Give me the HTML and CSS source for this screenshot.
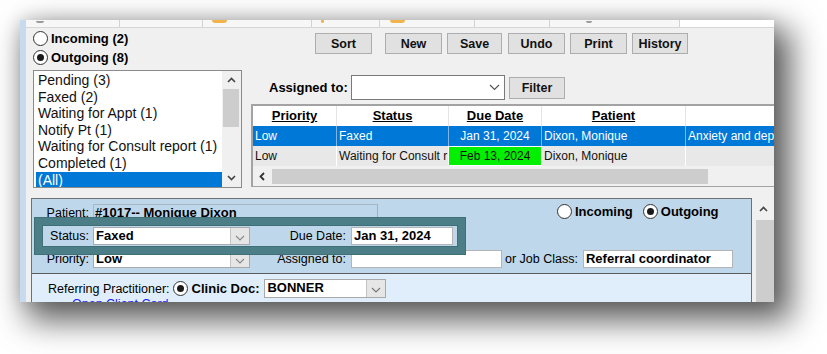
FILE: index.html
```html
<!DOCTYPE html>
<html>
<head>
<meta charset="utf-8">
<title>Referrals</title>
<link rel="stylesheet" href="styles.css">
</head>
<body>
<div class="shot">
  <div class="edge"></div>
  <div class="app">
    <div class="tabs">
      <div class="tab w1"><span class="mark gray m1"></span></div>
      <div class="tab w2"></div>
      <div class="tab w3"><span class="mark orange m3"></span></div>
      <div class="tab w4"><span class="mark orange m4"></span></div>
      <div class="tab w5"><span class="mark orange m5"></span></div>
      <div class="tab w6"></div>
      <div class="tab w7"><span class="mark gray m7"></span></div>
      <div class="tab blank"></div>
    </div>

    <div class="top">
      <div class="leftcol">
        <div class="radio"><span class="rb"></span><span class="rtext">Incoming (2)</span></div>
        <div class="radio"><span class="rb on"></span><span class="rtext">Outgoing (8)</span></div>
        <div class="listbox">
          <ul class="items">
            <li>Pending (3)</li>
            <li>Faxed (2)</li>
            <li>Waiting for Appt (1)</li>
            <li>Notify Pt (1)</li>
            <li>Waiting for Consult report (1)</li>
            <li>Completed (1)</li>
            <li class="selected">(All)</li>
          </ul>
          <div class="vscroll">
            <div class="arrow"><svg width="9" height="6" viewBox="0 0 9 6"><path d="M1 5 L4.5 1.5 L8 5" fill="none" stroke="#444" stroke-width="1.6"/></svg></div>
            <div class="thumb"></div>
            <div class="spacer"></div>
            <div class="arrow"><svg width="9" height="6" viewBox="0 0 9 6"><path d="M1 1 L4.5 4.5 L8 1" fill="none" stroke="#444" stroke-width="1.6"/></svg></div>
          </div>
        </div>
      </div>

      <div class="rightcol">
        <div class="buttons">
          <button class="btn b-sort">Sort</button>
          <button class="btn b-new">New</button>
          <button class="btn b-save">Save</button>
          <button class="btn b-undo">Undo</button>
          <button class="btn b-print">Print</button>
          <button class="btn b-hist">History</button>
        </div>
        <div class="assign">
          <span class="alabel">Assigned to:</span>
          <div class="combo"><span class="cv"><svg width="11" height="7" viewBox="0 0 11 7"><path d="M1 1 L5.5 5.5 L10 1" fill="none" stroke="#555" stroke-width="1.2"/></svg></span></div>
          <button class="btn b-filter">Filter</button>
        </div>
        <div class="grid">
          <div class="grow head">
            <div class="c">Priority</div>
            <div class="c">Status</div>
            <div class="c">Due Date</div>
            <div class="c">Patient</div>
            <div class="c"></div>
          </div>
          <div class="grow row-sel">
            <div class="c">Low</div>
            <div class="c">Faxed</div>
            <div class="c center">Jan 31, 2024</div>
            <div class="c">Dixon, Monique</div>
            <div class="c">Anxiety and dep</div>
          </div>
          <div class="grow row-alt">
            <div class="c">Low</div>
            <div class="c">Waiting for Consult r</div>
            <div class="c center due">Feb 13, 2024</div>
            <div class="c">Dixon, Monique</div>
            <div class="c"></div>
          </div>
          <div class="hscroll">
            <div class="harrow"><svg width="6" height="9" viewBox="0 0 6 9"><path d="M5 1 L1.5 4.5 L5 8" fill="none" stroke="#333" stroke-width="1.8"/></svg></div>
            <div class="hthumb"></div>
          </div>
        </div>
      </div>
    </div>

    <div class="panel">
      <div class="pmain">
        <div class="upper">
          <div class="frow">
            <span class="lab1">Patient:</span>
            <div class="pbox">#1017-- Monique Dixon</div>
            <div class="pradios">
              <span class="rb"></span><span class="rtext">Incoming</span>
              <span class="rb on gapl"></span><span class="rtext">Outgoing</span>
            </div>
          </div>
          <div class="frow">
            <span class="lab1">Status:</span>
            <div class="sel w157"><span class="val">Faxed</span><span class="arr"><svg width="10" height="6" viewBox="0 0 10 6"><path d="M1 1 L5 5 L9 1" fill="none" stroke="#888" stroke-width="1.1"/></svg></span></div>
            <span class="lab2">Due Date:</span>
            <div class="inp w102">Jan 31, 2024</div>
          </div>
          <div class="frow">
            <span class="lab1">Priority:</span>
            <div class="sel w157"><span class="val">Low</span><span class="arr"><svg width="10" height="6" viewBox="0 0 10 6"><path d="M1 1 L5 5 L9 1" fill="none" stroke="#888" stroke-width="1.1"/></svg></span></div>
            <span class="lab2">Assigned to:</span>
            <div class="inp w151"></div>
            <span class="lab3">or Job Class:</span>
            <div class="inp w150">Referral coordinator</div>
          </div>
          <div class="highlight"></div>
        </div>
        <div class="lower">
          <div class="lrow">
            <span class="rlabel">Referring Practitioner:</span>
            <span class="rb on"></span>
            <span class="rtext">Clinic Doc:</span>
            <div class="sel w122"><span class="val">BONNER</span><span class="arr"><svg width="10" height="6" viewBox="0 0 10 6"><path d="M1 1 L5 5 L9 1" fill="none" stroke="#777" stroke-width="1.1"/></svg></span></div>
          </div>
          <div class="link">Open Client Card</div>
        </div>
      </div>
      <div class="pscroll">
        <div class="arrow"><svg width="9" height="6" viewBox="0 0 9 6"><path d="M1 5 L4.5 1.5 L8 5" fill="none" stroke="#444" stroke-width="1.6"/></svg></div>
        <div class="pthumb"></div>
      </div>
    </div>
  </div>
</div>
</body>
</html>
```

FILE: styles.css
```css
* { box-sizing: border-box; }
html, body { margin: 0; padding: 0; background: #ffffff; }
body {
  font-family: "Liberation Sans", Arial, sans-serif;
  font-size: 13px;
  color: #000;
  width: 827px;
  height: 354px;
  overflow: hidden;
}

.shot {
  margin: 20px 0 0 20px;
  width: 754px;
  height: 282px;
  display: flex;
  overflow: hidden;
  box-shadow: 12px 14px 30px 5px rgba(0,0,0,0.62), 0 0 16px rgba(0,0,0,0.14);
}
.edge { width: 6px; flex: none; background: #c6dbf0; }
.app { flex: 1; min-width: 0; background: #f0f0f0; display: flex; flex-direction: column; }

/* cropped tab strip */
.tabs { height: 8px; flex: none; display: flex; background: #f7f7f7; border-bottom: 1px solid #d6d6d6; }
.tab { height: 100%; border-right: 1px solid #d2d2d2; display: flex; align-items: flex-start; }
.w1 { width: 94px; } .w2 { width: 83px; } .w3 { width: 109px; } .w4 { width: 68px; }
.w5 { width: 95px; } .w6 { width: 75px; } .w7 { width: 130px; }
.tab.blank { flex: 1; background: #fff; border-right: none; }
.mark { display: block; border-radius: 0 0 3px 3px; }
.mark.orange { background: #f0b44a; height: 3px; }
.mark.gray { background: #9a9a9a; height: 2px; }
.m1 { width: 8px; margin: 1px 0 0 10px; }
.m3 { width: 15px; margin-left: 9px; }
.m4 { width: 3px; margin-left: 9px; }
.m5 { width: 15px; margin-left: 10px; }
.m7 { width: 6px; margin: 1px 0 0 36px; }

/* top area */
.top { height: 170px; flex: none; display: flex; }
.leftcol { width: 225px; flex: none; padding: 1px 0 0 7px; }
.radio { height: 19px; display: flex; align-items: center; }
.rb {
  width: 15px; height: 15px; border-radius: 50%;
  border: 1px solid #333; background: #fff; flex: none;
  display: inline-flex; align-items: center; justify-content: center;
}
.rb.on::after { content: ""; width: 7px; height: 7px; border-radius: 50%; background: #1a1a1a; }
.rtext { font-weight: bold; font-size: 13px; margin-left: 3px; white-space: nowrap; }

.listbox {
  margin-top: 3px; width: 209px; height: 118px;
  border: 1px solid #8b8b8b; background: #fff; display: flex;
}
.items {
  list-style: none; margin: 0; padding: 1px 0 0 2px; flex: 1; overflow: hidden;
  font-size: 14px; line-height: 16.6px; color: #111;
}
.items li { padding-left: 2px; white-space: nowrap; }
.items li.selected { background: #0078d7; color: #fff; }
.vscroll { width: 19px; flex: none; background: #f0f0f0; display: flex; flex-direction: column; align-items: center; }
.vscroll .arrow { height: 18px; width: 100%; display: flex; align-items: center; justify-content: center; }
.vscroll .thumb { width: 16px; height: 38px; background: #cdcdcd; margin-right: 2px; }
.vscroll .spacer { flex: 1; }

.rightcol { flex: 1; min-width: 0; }
.buttons { margin-top: 5px; padding-left: 64px; display: flex; height: 21px; }
.btn {
  font-family: "Liberation Sans", Arial, sans-serif;
  font-weight: bold; font-size: 12.5px; color: #111;
  background: #e1e1e1; border: 1px solid #adadad;
  height: 21px; padding: 0; margin: 0;
}
.b-sort { width: 57px; }
.b-new { width: 57px; margin-left: 13px; }
.b-save { width: 55px; margin-left: 5px; }
.b-undo { width: 57px; margin-left: 6px; }
.b-print { width: 57px; margin-left: 5px; }
.b-hist { width: 56px; margin-left: 5px; }

.assign { margin-top: 21px; padding-left: 18px; display: flex; align-items: center; height: 25px; }
.alabel { font-weight: bold; font-size: 13px; width: 82px; }
.combo {
  width: 154px; height: 25px; background: #fff; border: 1px solid #7a7a7a;
  display: flex; align-items: center; justify-content: flex-end;
}
.combo .cv { width: 20px; display: flex; justify-content: center; }
.b-filter { width: 56px; margin-left: 4px; height: 22px; }

.grid {
  margin-top: 4px; height: 83px;
  border-top: 2px solid #a3a3a3; border-left: 2px solid #a3a3a3; border-bottom: 1px solid #a3a3a3;
  background: #fff; display: flex; flex-direction: column;
}
.grow {
  height: 20px; flex: none; display: grid;
  grid-template-columns: 83px 111px 92px 143px 1fr; column-gap: 1px;
  font-size: 12px;
}
.c { padding-left: 2px; white-space: nowrap; overflow: hidden; line-height: 20px; }
.c.center { text-align: center; padding-left: 0; }
.head { background: #e4e4e4; }
.head .c { background: #fff; font-weight: bold; font-size: 13px; text-decoration: underline; text-align: center; padding-left: 0; }
.row-sel { background: #7fb4e6; }
.row-sel .c { background: #0078d7; color: #fff; }
.row-alt { background: #fff; }
.row-alt .c { background: #e8e8e8; color: #111; }
.row-alt .c.due { background: #00f000; margin: 1px 0; line-height: 18px; }
.hscroll { height: 20px; flex: none; background: #f0f0f0; display: flex; align-items: center; }
.harrow { width: 17px; display: flex; justify-content: center; }
.hthumb { width: 436px; height: 15px; margin-left: 2px; background: #cdcdcd; }

/* detail panel */
.panel { flex: 1; display: flex; margin-left: 5px; min-height: 0; }
.pmain { flex: 1; border: 1px solid #707070; border-bottom: none; display: flex; flex-direction: column; overflow: hidden; }
.upper {
  position: relative; height: 75px; flex: none;
  background: #bed7ea; border-bottom: 1px solid #5c5c5c;
  padding-top: 5px;
}
.frow { display: flex; align-items: center; height: 18px; margin-bottom: 5px; }
.frow + .frow + .frow { margin-top: 1px; }
.lab1 { width: 57px; text-align: right; margin-right: 4px; font-size: 12.5px; flex: none; }
.lab2 { width: 96px; text-align: right; margin-right: 5px; font-size: 12.5px; flex: none; }
.lab3 { margin-left: 3px; margin-right: 5px; font-size: 12.5px; white-space: nowrap; }
.pbox {
  width: 285px; height: 18px; border: 1px solid #a7b7c3; border-right-color: #9fb0bd;
  font-weight: bold; font-size: 13px; line-height: 16px; padding-left: 1px; flex: none;
}
.pradios { display: flex; align-items: center; margin-left: 179px; margin-top: -4px; }
.pradios .rb { width: 15px; height: 15px; }
.pradios .gapl { margin-left: 10px; }

.sel { height: 18px; display: flex; background: #fff; border: 1px solid #a9a9a9; flex: none; }
.sel .val { flex: 1; font-weight: bold; font-size: 13px; line-height: 16px; padding-left: 2px; }
.sel .arr {
  width: 19px; background: #e6e6e6; border-left: 1px solid #c4c4c4;
  display: flex; align-items: center; justify-content: center; padding-top: 3px;
}
.w157 { width: 157px; }
.w122 { width: 122px; height: 19px; }
.inp {
  height: 18px; background: #fff; border: 1px solid #b4b4b4; flex: none;
  font-weight: bold; font-size: 13px; line-height: 16px; padding-left: 2px;
}
.w102 { width: 102px; }
.w151 { width: 151px; }
.w150 { width: 150px; }

.highlight {
  position: absolute; left: 3px; top: 19px; width: 430px; height: 36px;
  border: 7px solid #4b7e86; box-shadow: inset 0 0 0 1px #3f6f77, 0 0 0 1px #3f6f77;
}

.lower { flex: 1; background: #dfeefa; padding-top: 5px; }
.lrow { display: flex; align-items: center; height: 19px; padding-left: 16px; }
.rlabel { font-size: 12.5px; margin-right: 3px; }
.lrow .rtext { margin-right: 5px; margin-left: 4px; }
.link { padding-left: 40px; color: #1a1aff; font-size: 12.5px; line-height: 13px; margin-top: 0; }

.pscroll { width: 22px; flex: none; background: #f0f0f0; display: flex; flex-direction: column; align-items: flex-end; }
.pscroll .arrow { width: 100%; height: 22px; display: flex; align-items: center; justify-content: center; }
.pthumb { width: 18px; flex: 1; background: #cdcdcd; }
```
